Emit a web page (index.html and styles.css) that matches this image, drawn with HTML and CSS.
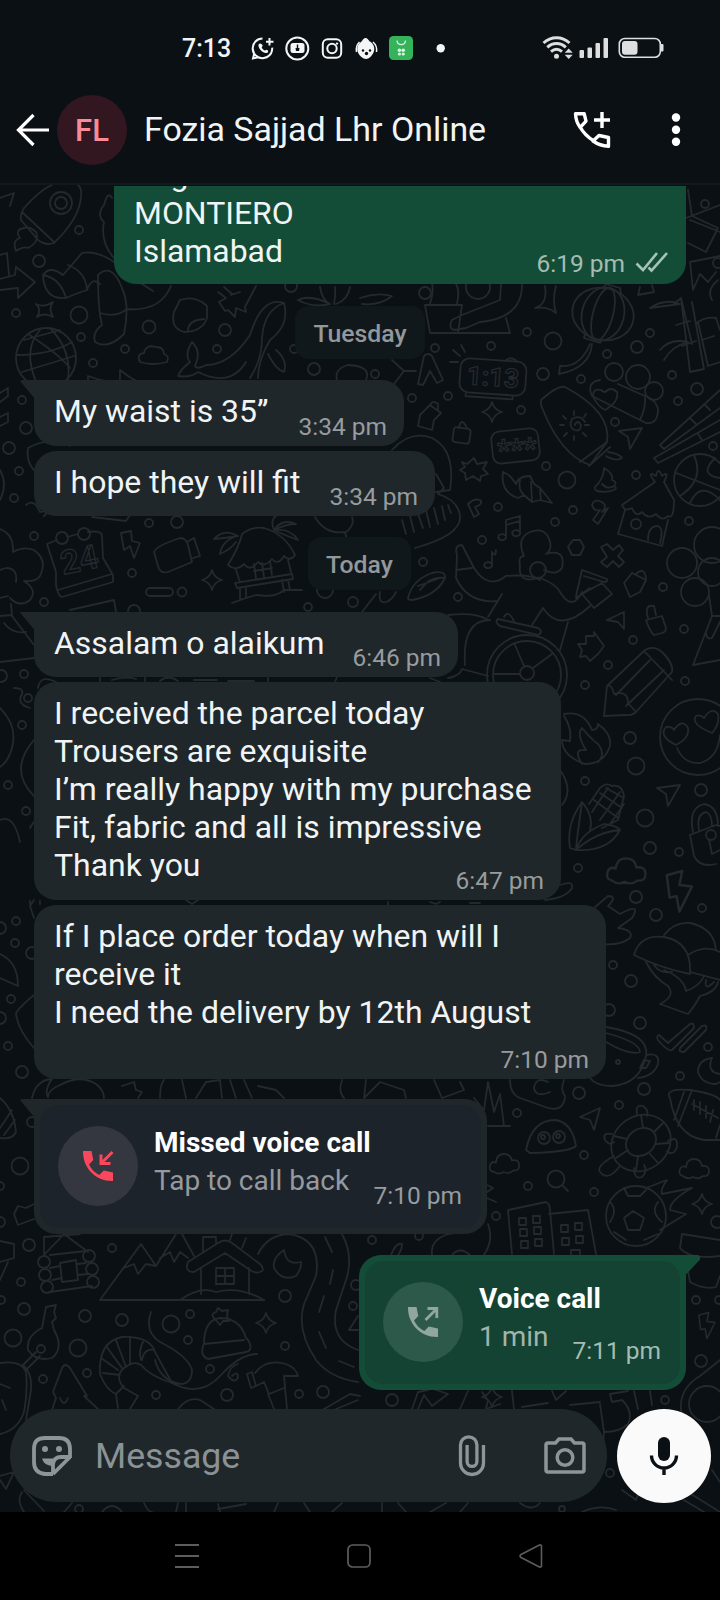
FILE: index.html
```html
<!DOCTYPE html>
<html lang="en">
<head>
<meta charset="utf-8">
<title>Chat</title>
<link rel="stylesheet" href="styles.css">
</head>
<body>
<div class="phone">
  <div class="status">
    <span class="clock">7:13</span>
    <svg class="status-icons" width="200" height="30" viewBox="250 33 200 30" fill="none" stroke="#f3f5f6" stroke-width="2">
      <path d="M262.500 38.600a9.800 9.800 0 1 0 9.700 9M252.800 48.500c0 2 .8 3.600 1.400 5l-1.200 5 5.200-1.200a9.800 9.800 0 0 0 14-9"/>
      <path d="M269.500 38v7.500M266 41.700h7.500"/>
      <path d="M258.700 44.300c-1.500 3 3.500 9 7.500 8.800 2.500-.2 2.600-2.800.4-3.400l-1.600.8c-1.500-.4-3-2-3.300-3.300l1-1.500c-.6-2-3-3.200-4-1.400z" fill="#f3f5f6" stroke="none"/>
      <circle cx="297.300" cy="48.500" r="11"/>
      <rect x="290.500" y="43" width="14" height="10" rx="2.500" fill="#f3f5f6" stroke="none"/>
      <path d="M297.500 44.500v4" stroke="#0b1014" stroke-width="1.400"/><path d="M295.500 48h4l-.5 3h-3z" fill="#0b1014" stroke="none"/>
      <rect x="322.800" y="39.300" width="18.400" height="18.400" rx="5"/><circle cx="332" cy="48.500" r="4.700"/><circle cx="337" cy="43.600" r="1.200" fill="#f3f5f6" stroke="none"/>
      <path d="M365 38c3 0 3.500 2.500 5 3.600 4 2.500 5.300 7 3.500 11-1.400 3-4.500 6.500-7.500 6.500s-6.500-3-8-6.500c-1.500-4-.5-8.500 3-10.600 1.500-1 2-3.500 4-4z" fill="#f3f5f6" stroke="none"/>
      <path d="M359.500 42a11 11 0 0 0-3 10M373 42a11 11 0 0 1 3.500 10" stroke-width="1.500"/>
      <circle cx="363" cy="50.500" r="1.200" fill="#0b1014" stroke="none"/><circle cx="370" cy="50.500" r="1.200" fill="#0b1014" stroke="none"/><circle cx="366.500" cy="53.500" r="1.700" fill="#0b1014" stroke="none"/>
      <rect x="389" y="36" width="24" height="24" rx="4.500" fill="#34b35a" stroke="none"/>
      <path d="M397 40.500c.5 5.500 8 5.500 8.500 0" stroke="#d8f5df" stroke-width="1.300"/>
      <g fill="#d8f5df" stroke="none"><circle cx="399.400" cy="50.200" r="1.800"/><circle cx="403.200" cy="50.200" r="1.800"/><circle cx="399.400" cy="54" r="1.600"/><circle cx="403.200" cy="54" r="1.600"/></g>
      <circle cx="440.700" cy="48.200" r="4.200" fill="#f3f5f6" stroke="none"/>
    </svg>
    <svg class="signal-icons" width="124" height="26" viewBox="541 35 124 26" fill="none">
      <g stroke="#dcdedf" stroke-width="3"><path d="M543.500 43c7.500-7 18.500-7 26 0"/><path d="M547.300 47.300c5.500-5 13-5 18.500 0"/><path d="M551 51.600c3.500-3 7.500-3 11 0"/></g>
      <g fill="#dcdedf"><circle cx="556.500" cy="56.300" r="2.500"/><path d="M568.700 48.500l4 4.300h-8zM568.700 59l4-4.300h-8z"/>
      <rect x="579.500" y="50" width="4.500" height="8" rx="1"/><rect x="587.500" y="47.500" width="4.500" height="10.500" rx="1"/><rect x="595.500" y="43" width="4.500" height="15" rx="1"/><rect x="603.500" y="38" width="4.500" height="20" rx="1"/>
      <rect x="622" y="41" width="15.500" height="13.800" rx="3"/><path d="M661 44h1.500a1 1 0 0 1 1 1v5.500a1 1 0 0 1-1 1H661z"/></g>
      <rect x="619.300" y="38.500" width="41" height="18.700" rx="5.500" stroke="#dcdedf" stroke-width="1.600"/>
    </svg>
  </div>

  <header class="topbar">
    <svg class="back" width="34" height="34" viewBox="16 112 34 34" fill="none" stroke="#fff" stroke-width="3.200"><path d="M49 129H19M33.500 114l-15 15 15 15"/></svg>
    <div class="avatar">FL</div>
    <h1 class="name">Fozia Sajjad Lhr Online</h1>
    <svg class="add-call" width="40" height="40" viewBox="572 110 40 40" fill="none" stroke="#fff" stroke-width="3.400">
      <path d="M575.500 113.700h8.700l1.800 7.500-5.800 6.200c-3-4-4.500-8.500-4.700-13.700zM608.500 146.300v-8.800l-9.500-2-6 5.500c5 3.500 10 5 15.500 5.300zM579.500 126c3.500 6.500 8 11.200 14.500 15" stroke-linejoin="round"/>
      <path d="M602 112v16M594 120h16"/>
    </svg>
    <svg class="more" width="10" height="36" viewBox="0 0 10 36" fill="#fff"><circle cx="5" cy="5.500" r="4.200"/><circle cx="5" cy="17.700" r="4.200"/><circle cx="5" cy="29.700" r="4.200"/></svg>
  </header>

  <main class="chat">
    <svg class="wallpaper" width="720" height="1327" viewBox="0 185 720 1327" fill="none" stroke="#23292d" stroke-width="1.800" stroke-linejoin="round" stroke-linecap="round">
      <defs>
        <path id="star" d="M0-10Q2-2 10 0Q2 2 0 10Q-2 2-10 0Q-2-2 0-10z"/>
        <path id="cloud" d="M-11 8q-5-1-3-7q2-4 6-2q1-8 8-8t8 7q7-1 7 5t-6 5q-5 4-10 1q-5 3-10-1z"/>
        <path id="bolt" d="M-8-12L3-15L1-5L10-4L1 14L-1 3L-6 4z"/>
        <path id="plane" d="M-12-7L11-10L-1 11L-3-1z"/>
        <path id="palmleaf" d="M0 0Q10-14 26-8Q14-6 0 0zM0 0Q-14-10-24 2Q-10-2 0 0zM0 0Q16 0 22 12Q10 4 0 0zM0 0Q-14 4-16 18Q-4 10 0 0zM0 0Q-2-14 4-20"/>
        <path id="note" d="M-4 10V-8L10-12V6M-4-3L10-7M-4 10a4 3 0 1 1-1-3M10 6a4 3 0 1 1-1-3"/>
      </defs>
      <!-- rocket, socks, globe -->
      <path d="M54 243Q46 246 38 240L21 220Q20 214 24 208Q40 190 52 185M54 243Q80 218 81 196Q82 188 78 185M22 212L54 242M24 228Q14 230 20 238Q12 240 16 251Q24 246 28 248Q40 242 36 232Q30 226 24 228M0 198L14 193L10 206"/>
      <circle cx="61" cy="203" r="11"/><circle cx="61" cy="203" r="6"/>
      <path d="M0 255L7 253L9 275M0 279L15 275L16 267L35 282L18 298L18 288L0 290"/>
      <path d="M43 275Q50 265 63 275L82 253Q96 250 114 262M68 265Q86 272 87 290Q92 276 100 284M43 275Q44 300 66 298Q80 292 87 290M43 275Q60 278 66 298"/>
      <path d="M98 275Q98 310 102 325Q92 332 95 342Q108 350 124 334Q130 305 122 288M100 313Q116 318 127 309M98 275Q112 262 122 288M127 309Q160 312 171 286M142 284L153 291M114 258Q100 242 104 222Q96 215 104 205Q108 190 112 198"/>
      <path d="M36 310Q44 314 53 308Q48 314 53 323Q44 318 37 323Q42 316 36 310z" transform="translate(0 -6)"/>
      <path d="M224 287L232 294M256 286L245 307L246 312L236 308L235 317L228 310L225 311L219 302L226 298L218 292M231 295L240 292"/>
      <path d="M180 300Q195 295 207 306L207 318Q202 332 184 332Q170 328 174 312zM188 331Q188 320 204 319"/>
      <circle cx="46" cy="358" r="30"/><path d="M17 355Q50 355 72 342M28 334Q60 355 70 368M40 330Q22 350 37 384M50 328Q72 350 68 380M24 340L60 330M22 372L74 356"/>
      <path d="M140 362q-4-8 4-9q2-9 12-6q8 0 8 7q6 2 3 8q-14 4-27 0z"/>
      <path d="M284 303Q262 296 250 335Q230 365 206 365Q197 370 195 366Q202 352 192 342Q184 355 190 362Q180 370 178 376Q190 378 198 372Q230 388 246 362M284 303Q290 325 270 340Q258 360 258 378M284 303Q264 310 262 338Q262 360 250 378M268 354Q276 370 284 372Q288 360 276 350"/>
      <path d="M298 300Q310 294 330 304Q312 308 298 300M320 287Q322 300 330 304M350 287Q348 300 336 304M335 287Q336 295 334 304M360 298Q376 292 392 296Q380 306 362 304M340 387Q330 370 348 365Q372 366 366 380"/>
      <path d="M88 382V376L100 380L112 382M120 382V370L128 376L138 382M0 393L8 388L8 396L0 402M0 417L8 413V422L0 426"/>
      <!-- flower pot, clock, pumpkin -->
      <path d="M425 305L462 305L458 333L510 333L506 318M425 305L430 333H458M430 304Q434 290 432 284M457 304Q460 290 456 284M452 320L462 315L500 300L501 285M452 320Q448 328 454 330L466 328L480 322Q522 318 522 285"/>
      <circle cx="425" cy="293" r="6"/><circle cx="478" cy="287" r="12"/>
      <path d="M545 286Q548 304 535 308Q548 306 556 313Q552 300 556 286"/>
      <ellipse cx="603" cy="314" rx="31" ry="26" transform="rotate(15 603 314)"/><ellipse cx="603" cy="314" rx="21" ry="27" transform="rotate(15 603 314)"/><ellipse cx="603" cy="314" rx="10" ry="27" transform="rotate(15 603 314)"/><path d="M603 288L606 284L620 288L621 294M585 334L584 338L600 343L601 339M590 344Q580 368 560 366L559 374Q590 368 592 344"/>
      <path d="M640 287L638 295L654 292L652 285"/>
      <g transform="rotate(4 493 376)"><rect x="460" y="360" width="66" height="34" rx="9"/><path d="M467 395V398H514V395M504 360q6-6 12 0"/><text class="doodle-text" x="493" y="386" text-anchor="middle" font-size="26">1:13</text></g>
      <path d="M453 350L460 356M461 345L465 352M450 362H458M392 360L404 371L394 384M416 371L404 371M418 384L424 356Q428 352 432 356L443 380L437 383L430 371L423 385z"/>
      <path d="M674 304L681 298L692 344M681 298L690 372L704 369L692 302M676 325L690 321M682 346L696 341M650 308Q665 298 680 304Q664 306 650 308M660 350Q670 338 688 342Q672 346 664 360M696 324Q704 316 716 318L720 330M698 322L708 366L720 362M702 340L714 336M690 220L720 232M686 218L720 205M688 190L692 216L718 228L706 252L688 243M690 262L720 256M690 262L693 290L700 274L708 282L716 272M712 300Q706 290 718 280"/>
      <path d="M600 380q-14 2-8 16l54 27q12 2 12-14q-2-8-10-12M640 420Q646 408 645 396L618 384"/><path d="M605 410q-8-4-12-14q0-8 8-6q2 2 4 2q6-6 12 0q2 10-12 18z"/>
      <circle cx="614" cy="372" r="9"/><circle cx="638" cy="377" r="12"/><circle cx="654" cy="391" r="9"/>
      <path d="M541 400Q558 385 565 387Q612 412 607 442L590 465Q560 455 541 405zM580 462L607 442M589 466L610 447M608 452Q620 454 622 458Q616 462 606 456"/>
      <path d="M575 425q2-6 6 0q0 7-7 5q-6-4-2-11q8-5 13 3" /><path d="M574 411v4M586 414l-2 3M563 416l3 3M560 425h4M589 425h-4M564 436l3-3M574 440v-4M586 436l-3-3"/>
      <path d="M720 390L660 445L664 449L720 408M654 458L720 420M654 458L658 463L720 432M690 418L696 424M704 404L710 410M698 434L702 440"/>
      <path d="M420 415L430 405L441 413L434 420L432 430L418 426zM430 406q2-7 8-2v6"/>
      <rect x="453" y="428" width="17" height="15" rx="3" transform="rotate(8 462 436)"/><path d="M459 428q2-12 8 0"/>
      <rect x="492" y="430" width="47" height="32" rx="8" transform="rotate(-6 515 446)"/><text class="doodle-text" x="517" y="459" text-anchor="middle" font-size="29" transform="rotate(-4 517 450)">***</text>
      <path d="M462 462L467 464L474 458L477 464L487 462L483 469L488 474L481 476L480 481L473 476L466 480L465 473L460 470L465 467z"/>
      <path d="M503 472Q500 492 518 498L524 495L532 502L540 500L552 503L540 488L534 484L530 476Q518 476 516 484Q510 474 503 472M520 480Q518 490 524 495M531 482L532 502M540 490L541 500"/>
      <path d="M598 484Q604 476 604 468Q614 474 612 480Q618 482 614 486Q608 490 602 484M598 484Q592 488 597 491Q606 493 614 490Q618 488 614 486"/>
      <circle cx="700" cy="480" r="26"/><path d="M676 473L720 490M694 455Q705 480 680 496M715 458Q698 475 720 478M690 503Q700 480 720 500"/>
      <path d="M392 450Q410 430 432 438Q456 450 450 490L436 492M436 474L444 488L438 494Q458 500 460 516Q462 535 415 548"/><path d="M402 520l4 14M410 516l4 16M418 514l5 14M426 510l4 17M434 508l4 16M442 506l3 14M448 505l3 8"/>
      <!-- shop, tree -->
      <path d="M622 505L655 482Q646 470 656 476Q658 466 662 476Q670 470 664 482L674 500Q674 520 668 516Q662 522 656 514Q648 520 642 512Q636 518 632 508Q624 512 622 505M625 510L618 534L662 546L668 520M648 540Q648 526 658 526Q664 528 660 543"/><circle cx="636" cy="524" r="5"/>
      <use href="#note" x="510" y="528"/><path d="M492 566V552Q496 558 496 550M492 566a4 3 0 1 1-1-3M468 504L474 517L479 514L475 507Q484 504 480 500Q474 498 468 504M592 505Q594 498 602 502Q608 506 602 512L608 508L598 524L593 520L600 510Q594 512 592 505"/>
      <path d="M457 555Q454 545 462 545L474 568Q488 590 506 576Q530 574 540 580M538 578Q518 584 520 566Q518 556 524 556Q516 538 530 532Q546 526 550 542Q552 550 546 554Q566 548 562 568Q556 576 544 570M540 578Q556 584 560 592Q572 612 582 592M457 555L456 578Q468 604 498 601M456 570L472 568M576 598L590 588M502 594L488 617M543 608L532 625M543 608Q560 634 590 606M576 596L582 570L607 579Q608 582 604 582L584 576M568 622L560 650M582 594L602 583L612 594L594 608z"/>
      <circle cx="538" cy="570" r="8"/>
      <path d="M573 540l7 0 4 7-4 8h-8l-4-8zM601 547l6-3 6 6 6-5 4 5-5 6 6 6-5 5-6-6-6 6-6-5 6-5z"/>
      <path d="M624 583L632 573L646 580L640 592L630 597zM636 574q8-8 10 4M408 598Q412 580 432 573Q446 570 445 578Q436 596 412 600Q408 600 408 598M420 590Q430 576 444 578M418 586L440 578"/>
      <path d="M376 594L362 612M380 592Q378 604 386 602Q392 600 396 592"/>
      <circle cx="527" cy="675" r="40"/><circle cx="527" cy="675" r="34"/><circle cx="527" cy="673" r="7"/><path d="M524 666L515 645M533 668L552 654M520 674H494M498 619L538 628Q544 632 538 635L500 626Q494 622 498 619zM504 617q4-8 10 4M448 615Q476 612 488 620M462 669L488 676M465 665Q462 620 490 620M448 678Q460 676 462 669"/>
      <path d="M578 644L586 644L586 636L594 636L594 632L604 646L598 654L590 661L586 656L580 657L582 650zM607 620L624 612V629L618 622zM646 620L662 616L666 628Q666 632 662 633L654 635Q650 632 646 620zM648 618q-4-14 6-12l2 9"/>
      <path d="M607 686L645 650Q654 645 662 652Q674 664 672 672L636 712Q632 716 625 715L604 716zM607 686Q612 684 614 694Q628 690 628 703L636 712M616 695L650 660M645 652L672 680M626 706L664 670"/>
      <circle cx="712" cy="572" r="14"/><circle cx="682" cy="563" r="15"/><circle cx="695" cy="592" r="14"/><circle cx="712" cy="545" r="18"/><path d="M709 595L712 616L693 665L720 660M712 616H720M706 632Q706 640 712 638L720 622"/>
      <circle cx="698" cy="737" r="38"/><path d="M676 745Q658 736 666 727Q672 726 674 730Q682 718 688 728Q690 738 676 745zM712 733Q690 724 696 716Q700 714 704 718Q712 706 718 714Q720 724 712 733zM677 748Q684 764 700 763Q718 758 720 735"/>
      <path d="M564 714Q584 710 592 730Q598 730 598 724Q612 734 610 746Q604 764 585 764Q562 756 562 740L570 741Q572 728 564 716M582 764Q572 748 586 750Q576 734 582 728Q592 740 598 744Q606 754 598 762"/>
      <path d="M589 804L600 788Q606 782 612 786Q622 784 624 796L618 820L602 828M594 800L618 818M600 793L622 808M606 788L624 798M592 812L608 788M600 820L620 792M610 824L624 804M582 802Q566 824 570 848L576 850Q582 832 604 824Q618 826 620 830Q608 852 576 850M582 802Q594 816 590 830M582 802Q578 830 576 848M576 850Q596 832 620 830"/>
      <use href="#plane" x="669" y="795"/>
      <path d="M690 835L716 825L720 826M690 835L694 856Q700 868 716 864M693 832Q688 808 704 804Q718 806 718 826M699 830Q696 814 706 812Q712 814 712 826M709 840L712 854L720 850"/><circle cx="711" cy="835" r="5"/>
      <use href="#cloud" transform="translate(626 870) scale(1.300)"/><use href="#bolt" transform="translate(678 892) scale(1.400)"/>
      <path d="M560 770Q574 790 562 805M560 885Q574 880 572 888Q566 898 545 900M594 908L608 896Q618 896 608 906L620 914Q642 902 632 918L618 928Q634 930 630 938Q620 946 600 944"/>
      <!-- tree, calendar, hut -->
      <path d="M0 529Q14 534 13 552Q24 546 34 550Q48 560 40 576Q36 582 24 581Q38 590 30 600Q20 608 10 598M16 582Q18 568 6 568L0 570M0 598L8 596"/><path d="M11 604L12 616L34 645M0 616L12 615M0 662L34 658M4 623Q12 634 26 632"/>
      <path d="M47 544L57 540M67 537L78 534M88 532Q102 530 102 536L103 558L113 575V582L62 597Q58 596 56 585V572L47 544M58 590L112 574"/><circle cx="62" cy="538" r="6"/><circle cx="84" cy="534" r="6"/><text class="doodle-text" x="80" y="571" text-anchor="middle" font-size="33" transform="rotate(-12 80 562)">24</text>
      <path d="M121 533L131 531L132 541L140 543L134 558L130 546L124 550z"/>
      <path d="M154 552Q156 546 180 538Q186 538 188 545L192 562L168 572Q160 574 158 566zM187 542L194 538L200 556L193 558"/><rect x="146" y="588" width="27" height="8" rx="4"/>
      <path d="M228 565Q240 545 242 534Q252 526 264 528Q285 534 295 555Q290 562 284 556Q278 566 272 559Q264 568 258 562Q250 572 244 564Q236 572 228 565M236 570L240 582M288 560L291 572M235 583L292 574L293 579L237 588zM254 564L256 578M262 563L264 577M270 561L272 575M254 571L272 568M240 588V600M246 587V598M282 580L284 592M288 580L290 590M232 603Q244 598 256 595Q276 598 284 590L302 590"/>
      <path d="M274 530Q270 520 276 516M274 530Q282 518 296 524Q286 524 274 530Q290 528 298 540Q286 536 274 530M238 536Q224 528 214 539Q226 538 238 536Q222 540 220 554Q230 550 236 542"/>
      <path d="M315 517Q325 535 346 532Q355 525 352 517M345 532L349 548M70 610L114 600L116 612M92 517L126 521L130 515M28 448Q50 436 70 446M28 448Q26 462 34 470M26 505Q34 498 40 512Q50 510 44 516M0 470Q8 484 0 500"/>
      <path d="M14 688Q24 688 22 694Q16 704 30 708M38 688Q40 674 56 682M0 708Q18 726 12 748Q8 762 0 767M34 740Q8 770 34 796M0 820Q14 814 20 842M30 828Q32 824 34 822"/>
      <circle cx="28" cy="698" r="4"/>
      <path d="M100 677V682M112 680Q126 676 136 679M145 677V682M160 681Q168 674 178 681M194 680H217M228 681H254M268 677V682M337 677L335 682M430 678L440 682"/>
      <path d="M34 900L30 906L34 918M0 954Q18 962 18 986L0 978M34 995Q16 1010 16 1014Q18 1030 34 1048M0 1098Q14 1110 16 1132Q12 1140 0 1138M0 1128L12 1110M4 1135L15 1120"/>
      <!-- gap under the long message -->
      <path d="M32 1098Q36 1080 52 1079Q44 1090 48 1097M60 1085Q80 1074 96 1084Q104 1090 104 1098M60 1085Q48 1090 48 1097M122 1086L134 1082L136 1090L142 1092L138 1098M160 1098Q160 1084 164 1080M182 1080L186 1098M196 1098L206 1082L220 1080L222 1098M230 1080L236 1098M244 1080L252 1098M258 1086L276 1090L284 1098M342 1080Q338 1092 344 1098M366 1080L364 1098L380 1082L404 1090L406 1098M434 1080L442 1098L464 1090L460 1082M474 1098L484 1110L488 1082L494 1112L500 1094L504 1126H510H488"/>
      <path d="M30 901V904M40 901V904M186 900L192 904L198 900M388 902V905M430 902L436 904L440 902M470 903L480 903"/>
      <!-- mushrooms, cup, turtle, ball -->
      <path d="M634 955Q640 934 664 937Q692 942 690 974Q660 968 634 955M664 935Q674 922 690 923Q714 928 716 950M688 955Q704 944 720 952M690 972L720 980M646 962Q654 978 668 986Q676 996 660 1004L688 1014Q696 1004 700 996Q716 992 718 982M654 965Q660 974 672 972M664 970Q684 978 686 991Q700 986 704 976M706 980Q704 992 714 982"/>
      <path d="M606 1027Q650 1034 646 1056Q640 1084 612 1086Q596 1086 590 1078M606 1033Q640 1042 640 1052Q630 1056 606 1042M646 1055Q660 1052 658 1064Q654 1076 638 1078M640 1068L644 1060L650 1061L646 1068z"/><circle cx="618" cy="1062" r="2"/>
      <path d="M659 1035L668 1043L690 1024Q694 1022 694 1028L672 1050Q668 1052 658 1040Q656 1036 659 1035M680 1048L702 1026Q708 1024 706 1030L684 1052Q678 1052 680 1048"/>
      <path d="M712 1058Q698 1060 698 1072Q702 1084 716 1084L720 1082M712 1058Q706 1072 720 1074"/>
      <path d="M510 1080Q510 1094 520 1098L548 1108Q564 1112 565 1096Q560 1090 564 1080M548 1082Q536 1076 534 1088Q536 1098 550 1092"/>
      <path d="M580 1117L600 1108L594 1130L590 1120zM526 1150Q532 1120 555 1120Q572 1122 576 1146Q570 1152 530 1153z"/><circle cx="544" cy="1138" r="6"/><circle cx="559" cy="1137" r="6"/><circle cx="543" cy="1137" r="2"/><circle cx="558" cy="1136" r="2"/>
      <use href="#cloud" transform="translate(504 1163) rotate(-4)"/><use href="#cloud" transform="translate(694 1168)"/>
      <circle cx="556" cy="1179" r="8.500"/><path d="M562 1185L568 1191"/>
      <ellipse cx="641" cy="1143" rx="31" ry="27" transform="rotate(-35 641 1143)"/><ellipse cx="641" cy="1142" rx="16" ry="13" transform="rotate(-35 641 1142)"/><path d="M641 1115L643 1128M663 1123L654 1132M669 1143L656 1144M658 1163L650 1154M636 1170L638 1157M616 1158L628 1150M614 1136L627 1139M637 1114q-2-10 6-8q6 4 4 10M668 1141q10-6 9 6q-4 10-10 4M634 1168q0 12 8 9q6-6 2-12M614 1156Q596 1166 600 1172Q608 1182 620 1166M612 1134q-10-2-7 6q4 6 9 2"/>
      <path d="M670 1098Q664 1088 690 1090Q716 1094 720 1100M670 1098Q676 1136 704 1140L720 1140M684 1092L674 1120M692 1090L678 1126M692 1104L718 1118M694 1100V1110M700 1102V1114M706 1106V1118M713 1110L710 1122M720 1125L716 1138"/>
      <circle cx="636" cy="1216" r="30"/><path d="M624 1218L633 1211L644 1218L640 1230H628zM624 1188L628 1196H640L646 1190M610 1202Q618 1210 610 1222M658 1202Q650 1212 662 1222M614 1232L626 1240M644 1240L658 1234M646 1188L667 1180Q660 1190 662 1194L692 1188Q670 1200 670 1210L686 1214L660 1230"/>
      <path d="M512 1254L508 1210L546 1202Q550 1204 550 1210L554 1254M549 1214L588 1210L596 1254"/><path d="M519 1218h7v7h-7zM533 1216h7v7h-7zM520 1229h7v7h-7zM534 1227h7v7h-7zM521 1241h7v7h-7zM535 1239h7v7h-7zM561 1225h7v7h-7zM575 1223h7v7h-7zM562 1238h7v7h-7zM576 1236h7v7h-7zM571 1254V1250H580V1254"/>
      <path d="M487 1185L493 1188L487 1192M487 1198L496 1202M391 1255Q396 1242 402 1244Q402 1250 398 1255M432 1255Q430 1240 448 1234L474 1230M488 1224Q494 1240 484 1255M452 1255Q460 1246 470 1255"/>
      <path d="M682 1234L720 1240M682 1234L680 1248Q690 1260 720 1256M686 1260L690 1282Q704 1290 716 1287L720 1276"/>
      <!-- cabin, mountains, road, tools -->
      <path d="M0 1241L14 1244V1258L0 1262M0 1280L8 1262"/>
      <path d="M44 1255L64 1234L88 1252M44 1255V1237L80 1234M50 1255L86 1251M50 1292L92 1286M60 1263L76 1260L78 1280L62 1282zM50 1268L60 1266M78 1264L86 1263M52 1280L62 1278M78 1275L88 1274"/><circle cx="44" cy="1262" r="6"/><circle cx="45" cy="1275" r="6"/><circle cx="47" cy="1287" r="6"/><circle cx="89" cy="1256" r="6"/><circle cx="92" cy="1269" r="6"/><circle cx="93" cy="1282" r="6"/>
      <path d="M100 1300L141 1244L156 1266L176 1234M182 1234L194 1256M100 1300H264M124 1268L134 1264L138 1274L146 1264L156 1266M160 1258L170 1252L174 1262L180 1252L188 1258"/>
      <path d="M188 1262L218 1243Q225 1238 232 1243L260 1264Q266 1270 260 1272Q256 1274 250 1270L225 1253L194 1272Q184 1272 188 1262M201 1268V1294M249 1268V1294M216 1268h18v16h-18zM225 1268v16M216 1276h18M180 1300Q200 1286 216 1292Q240 1286 264 1300M203 1252V1237H216V1244M232 1234L230 1240M246 1238L242 1248"/>
      <path d="M284 1250Q272 1258 274 1268Q282 1282 296 1276Q302 1268 301 1262Q286 1266 284 1250"/>
      <path d="M258 1254Q268 1234 290 1234Q322 1240 316 1276L304 1304Q296 1330 316 1360Q330 1378 358 1382M342 1234Q354 1256 346 1280L336 1310Q330 1340 358 1350M325 1237L332 1252M333 1270L330 1284M324 1296L319 1312M319 1332L326 1348M339 1361L354 1367M349 1330L358 1316M349 1330H358"/>
      <path d="M46 1307L56 1305L54 1312L56 1318L52 1322L54 1330L57 1336Q62 1350 52 1358Q36 1362 28 1350Q26 1336 42 1328zM36 1352L22 1366M40 1356L26 1370"/><circle cx="41" cy="1349" r="4"/>
      <path d="M0 1363Q22 1360 26 1372Q28 1390 24 1412Q18 1430 0 1434M24 1366Q34 1376 30 1396L26 1420M0 1384L10 1388M2 1400L6 1410M52 1410L56 1398L53 1392L62 1368Q65 1362 70 1368L87 1396L84 1396L98 1409M60 1398Q64 1408 68 1398"/>
      <path d="M100 1374Q98 1342 122 1337Q150 1336 155 1352L172 1383Q150 1376 141 1365Q134 1360 124 1368Q114 1376 124 1388L138 1396L130 1409M100 1374Q106 1390 116 1394L118 1408M101 1358L118 1370M106 1346L122 1368M116 1340L126 1367M130 1337L130 1364M144 1340Q138 1350 141 1360M103 1373L120 1375M116 1394L124 1386M142 1360Q144 1348 154 1350"/>
      <path d="M151 1312Q144 1332 160 1342Q188 1356 192 1370Q192 1384 180 1384Q160 1380 155 1360M172 1383Q200 1398 220 1376Q240 1354 257 1354M232 1376Q238 1370 238 1378Q234 1384 228 1376Q230 1366 238 1364"/>
      <path d="M204 1344Q204 1320 220 1318Q240 1318 246 1338L248 1340Q254 1350 246 1352L208 1359Q200 1356 203 1346zL244 1340M214 1318q-4-4 2-6l2-4l4 3l6-1l-1 6l2 5l-6 0l-3 4z"/>
      <path d="M247 1374L252 1372L256 1386L251 1388zM255 1373Q266 1358 286 1364Q296 1368 298 1376L284 1376L287 1409M268 1394L274 1409M256 1386L264 1382L269 1394L284 1388M324 1409L350 1394L360 1396M336 1409L358 1400M178 1409Q188 1396 200 1400L214 1409"/>
      <path d="M412 1409L418 1392L428 1390M418 1409L424 1395L432 1406L448 1394L436 1390M460 1409L468 1391M482 1392L488 1400L486 1409L500 1404M512 1391L514 1409M552 1391L556 1400L566 1391M610 1394L628 1391M610 1394L612 1402L622 1400Q634 1412 628 1424Q620 1432 604 1432L600 1404M570 1405L600 1402M522 1407L548 1403M604 1432L602 1460M634 1391L638 1409M650 1391L652 1405M682 1418Q676 1390 700 1376L720 1360"/>
      <circle cx="707" cy="1404" r="18"/>
      <use href="#bolt" transform="translate(706 1326) scale(.9)"/>
      <path d="M0 1476L14 1472L6 1489L0 1480M22 1492Q16 1500 24 1512M24 1490L44 1511M64 1512L72 1503M102 1512Q112 1500 122 1512M144 1503Q148 1512 152 1512M176 1512L178 1503M186 1512V1503M218 1504L220 1512M218 1509L246 1504M274 1512L278 1503M310 1512L304 1503M332 1512L342 1503M382 1512V1503M398 1503L406 1512M430 1512L446 1503M460 1512L468 1503M520 1503Q532 1512 540 1503M582 1512Q600 1504 616 1510M684 1500L704 1512M688 1492L720 1512M622 1490L636 1500L640 1490M712 1470L720 1482"/>
      <g>
        <circle cx="79" cy="230" r="4"/><circle cx="39" cy="261" r="6"/><circle cx="16" cy="313" r="4"/><circle cx="79" cy="315" r="8.500"/><circle cx="149" cy="327" r="6.500"/><circle cx="81" cy="337" r="4"/><circle cx="125" cy="349" r="4"/><circle cx="93" cy="363" r="4"/><circle cx="225" cy="330" r="6"/><circle cx="217" cy="349" r="4"/><circle cx="291" cy="286" r="6"/><circle cx="314" cy="369" r="6"/><circle cx="294" cy="349" r="4"/><circle cx="22" cy="400" r="4"/><circle cx="26" cy="428" r="6"/><circle cx="9" cy="448" r="6"/><circle cx="19" cy="471" r="4"/><circle cx="14" cy="498" r="4"/>
        <circle cx="705" cy="204" r="4"/><circle cx="718" cy="263" r="5"/><circle cx="527" cy="332" r="4"/><circle cx="553" cy="341" r="8.500"/><circle cx="491" cy="346" r="4"/><circle cx="435" cy="348" r="4"/><circle cx="650" cy="333" r="4"/><circle cx="637" cy="347" r="6"/><circle cx="607" cy="354" r="4"/><circle cx="543" cy="374" r="6"/><circle cx="581" cy="379" r="4"/><circle cx="672" cy="375" r="4"/><circle cx="697" cy="389" r="6"/><circle cx="678" cy="401" r="4"/><circle cx="448" cy="396" r="4"/><circle cx="412" cy="398" r="4"/><circle cx="521" cy="410" r="4"/><circle cx="615" cy="422" r="4"/><circle cx="546" cy="466" r="4"/><circle cx="567" cy="480" r="8.500"/><circle cx="636" cy="475" r="4"/><circle cx="713" cy="446" r="4"/><circle cx="498" cy="507" r="4"/><circle cx="573" cy="510" r="4"/><circle cx="375" cy="374" r="4"/>
        <circle cx="149" cy="523" r="4"/><circle cx="177" cy="522" r="6"/><circle cx="34" cy="536" r="4"/><circle cx="132" cy="573" r="4"/><circle cx="182" cy="592" r="4.500"/><circle cx="44" cy="602" r="4"/><circle cx="134" cy="611" r="6"/><circle cx="308" cy="607" r="4"/><circle cx="325" cy="590" r="8"/><circle cx="353" cy="602" r="5"/><circle cx="24" cy="674" r="4"/><circle cx="1" cy="676" r="6"/><circle cx="22" cy="725" r="4"/><circle cx="8" cy="785" r="4"/><circle cx="26" cy="811" r="4"/>
        <circle cx="555" cy="522" r="4"/><circle cx="482" cy="540" r="4"/><circle cx="423" cy="562" r="4"/><circle cx="458" cy="597" r="4"/><circle cx="663" cy="587" r="4"/><circle cx="689" cy="521" r="4"/><circle cx="684" cy="629" r="4"/><circle cx="633" cy="640" r="4"/><circle cx="608" cy="665" r="4"/><circle cx="585" cy="685" r="4"/><circle cx="685" cy="681" r="4"/><circle cx="630" cy="738" r="6"/><circle cx="636" cy="766" r="8.500"/><circle cx="585" cy="781" r="4"/><circle cx="701" cy="790" r="6"/><circle cx="645" cy="818" r="8.500"/><circle cx="650" cy="848" r="6"/><circle cx="679" cy="852" r="4"/><circle cx="578" cy="868" r="4"/><circle cx="636" cy="897" r="6"/><circle cx="702" cy="908" r="4"/><circle cx="656" cy="915" r="6"/>
        <circle cx="16" cy="921" r="4"/><circle cx="0" cy="928" r="6"/><circle cx="15" cy="943" r="4"/><circle cx="32" cy="953" r="6"/><circle cx="11" cy="999" r="4"/><circle cx="0" cy="1018" r="6"/><circle cx="8" cy="1046" r="4"/><circle cx="22" cy="1072" r="6"/><circle cx="32" cy="1122" r="5"/><circle cx="20" cy="1166" r="8.500"/><circle cx="0" cy="1186" r="4"/><circle cx="0" cy="1222" r="5"/>
        <path d="M14 1214L18 1206L26 1208L34 1204M14 1214L18 1225L34 1219"/>
        <circle cx="613" cy="965" r="4"/><circle cx="631" cy="981" r="6"/><circle cx="609" cy="1010" r="6"/><circle cx="640" cy="1023" r="6"/><circle cx="708" cy="1047" r="4"/><circle cx="680" cy="1076" r="4"/><circle cx="644" cy="1089" r="6"/><circle cx="579" cy="1093" r="6"/><circle cx="619" cy="1105" r="4"/><circle cx="517" cy="1113" r="4"/><circle cx="584" cy="1155" r="4"/><circle cx="528" cy="1186" r="4"/><circle cx="594" cy="1192" r="4"/><circle cx="496" cy="1216" r="4"/><circle cx="717" cy="1222" r="6"/><circle cx="372" cy="1240" r="4"/><circle cx="419" cy="1236" r="4"/><circle cx="696" cy="1300" r="4"/><circle cx="719" cy="1300" r="4"/><circle cx="701" cy="1361" r="6"/>
        <circle cx="29" cy="1245" r="6"/><circle cx="112" cy="1248" r="4"/><circle cx="21" cy="1282" r="4"/><circle cx="1" cy="1300" r="4"/><circle cx="24" cy="1309" r="6"/><circle cx="85" cy="1316" r="6"/><circle cx="122" cy="1320" r="6"/><circle cx="171" cy="1324" r="8.500"/><circle cx="190" cy="1314" r="4"/><circle cx="13" cy="1338" r="8.500"/><circle cx="78" cy="1348" r="8.500"/><circle cx="188" cy="1340" r="4"/><circle cx="285" cy="1296" r="6"/><circle cx="285" cy="1346" r="4"/><circle cx="43" cy="1379" r="4"/><circle cx="87" cy="1373" r="4"/><circle cx="156" cy="1395" r="4"/><circle cx="210" cy="1369" r="4"/><circle cx="227" cy="1395" r="6"/><circle cx="299" cy="1394" r="4"/><circle cx="323" cy="1392" r="6"/><circle cx="353" cy="1306" r="4"/><circle cx="356" cy="1285" r="5"/><circle cx="392" cy="1400" r="6"/><circle cx="665" cy="1400" r="4"/><circle cx="610" cy="1473" r="4"/><circle cx="79" cy="1509" r="4"/><circle cx="562" cy="1509" r="3"/>
      </g>
      <use href="#star" x="492" y="412"/><use href="#star" x="212" y="580"/><use href="#star" x="702" y="1204"/><use href="#star" x="266" y="1323"/><use href="#star" x="492" y="1397"/>
      <use href="#plane" x="631" y="438"/>
    </svg>

    <section class="messages">
      <div class="bubble out cut"><p class="text">Regards<br>MONTIERO<br>Islamabad</p>
        <span class="time">6:19 pm <svg class="ticks" width="34" height="22" viewBox="0 0 34 22" fill="none" stroke="#a4c4b5" stroke-width="2.600"><path d="M1.500 12.500L8 19L22 2M13.500 16.500L16.500 19.500L32 2"/></svg></span></div>

      <div class="day tuesday">Tuesday</div>

      <div class="bubble tail b1"><p class="text">My waist is 35”</p><span class="time">3:34 pm</span></div>
      <div class="bubble b2"><p class="text">I hope they will fit</p><span class="time">3:34 pm</span></div>

      <div class="day today">Today</div>

      <div class="bubble tail b3"><p class="text">Assalam o alaikum</p><span class="time">6:46 pm</span></div>
      <div class="bubble b4"><p class="text">I received the parcel today<br>Trousers are exquisite<br>I’m really happy with my purchase<br>Fit, fabric and all is impressive<br>Thank you</p><span class="time">6:47 pm</span></div>
      <div class="bubble b5"><p class="text">If I place order today when will I<br>receive it<br>I need the delivery by 12th August</p><span class="time">7:10 pm</span></div>

      <div class="bubble tail call missed">
        <div class="card">
          <span class="disc"><svg width="34" height="34" viewBox="0 0 34 34"><path fill="#f9485c" d="M2 2h8.500l1.800 9-4.300 4.400c2.300 4.700 5.700 8.200 10.300 10.500l4.500-4.300L32 23.500V32C15 32.500 1.500 19 2 2z"/><path d="M31.500 3L20.500 14M20 5.500V14.500h9.500" fill="none" stroke="#f9485c" stroke-width="3"/></svg></span>
          <div class="call-copy"><strong>Missed voice call</strong><span class="call-sub">Tap to call back</span></div>
          <span class="time">7:10 pm</span>
        </div>
      </div>

      <div class="bubble out tail-out call made">
        <div class="card">
          <span class="disc"><svg width="34" height="34" viewBox="0 0 34 34"><path fill="#91a69d" d="M2 2h8.500l1.800 9-4.300 4.400c2.300 4.700 5.700 8.200 10.300 10.500l4.500-4.300L32 23.500V32C15 32.500 1.500 19 2 2z"/><path d="M19.500 15L31 3.500M21.500 3.500H30.800V13" fill="none" stroke="#91a69d" stroke-width="2.800"/></svg></span>
          <div class="call-copy"><strong>Voice call</strong><span class="call-sub">1 min</span></div>
          <span class="time">7:11 pm</span>
        </div>
      </div>
    </section>

    <footer class="composer">
      <div class="field">
        <svg width="42" height="42" viewBox="0 0 42 42" fill="none" stroke="#8d9598" stroke-width="3.800"><path d="M22 39H14Q3 38 3 27V14Q3 3 14 3H28Q39 3 39 14V23M39 22L22 39M22 39V29Q23 22 30 22H39"/><path d="M11 23.500H27Q23 26 22.500 29V31Q13 31 11 23.500z" fill="#8d9598" stroke="none"/><circle cx="14" cy="14" r="3" fill="#8d9598" stroke="none"/><circle cx="28" cy="14" r="3" fill="#8d9598" stroke="none"/></svg>
        <span class="placeholder">Message</span>
        <svg class="clip" width="28" height="42" viewBox="0 0 28 42" fill="none" stroke="#8d9598" stroke-width="3.300"><path d="M25.500 10V28A11.500 11.500 0 0 1 2.500 28V10A8.200 8.200 0 0 1 18.900 10V26.500A4.900 4.900 0 0 1 9.100 26.500V10"/></svg>
        <svg width="42" height="38" viewBox="0 0 42 38" fill="none" stroke="#8d9598" stroke-width="3.500"><path d="M4 6H11.500L15 2H27L30.500 6H38Q40 6 40 8V33Q40 35 38 35H4Q2 35 2 33V8Q2 6 4 6z"/><circle cx="21" cy="20.500" r="7.800"/></svg>
      </div>
      <div class="mic"><svg width="30" height="42" viewBox="0 0 30 42"><rect x="9" y="2" width="12" height="24" rx="6" fill="#0b1014"/><path d="M2.500 20.500A12.500 12.500 0 0 0 27.500 20.500M15 33V40" fill="none" stroke="#0b1014" stroke-width="3.400"/></svg></div>
    </footer>
  </main>

  <nav class="navbar">
    <svg width="24" height="26" viewBox="0 0 24 26" stroke="#5d5d5d" stroke-width="1.800"><path d="M0 2H24M0 13H24M0 24H24"/></svg>
    <svg width="24" height="26" viewBox="0 0 24 26" fill="none" stroke="#5d5d5d" stroke-width="1.700"><rect x="1" y="2" width="22" height="22" rx="4.500"/></svg>
    <svg width="24" height="26" viewBox="0 0 24 26" fill="none" stroke="#5d5d5d" stroke-width="1.600" stroke-linejoin="round"><path d="M2 11.500L20.500 2Q22.500 1.500 22.500 3.500V22.500Q22.500 24.500 20.500 24L2 14.500Q0 13 2 11.500z"/></svg>
  </nav>
</div>
</body>
</html>
```
FILE: styles.css
```css
* { box-sizing: border-box; }
body { margin: 0; background: #000; font-family: Roboto, "Noto Sans", sans-serif; color: #f1f4f5; }
svg { display: block; flex: none; }
.phone { width: 720px; height: 1600px; display: flex; flex-direction: column; background: #0b1014; overflow: hidden; }

.status { height: 76px; padding: 33px 0 0 182px; display: flex; align-items: flex-start; }
.clock { width: 68px; font-size: 25px; line-height: 31px; font-weight: 500; white-space: nowrap; }
.signal-icons { margin: 2px 0 0 91px; }

.topbar { height: 109px; padding: 0 39px 0 16px; display: flex; align-items: center; border-bottom: 2px solid #12181c; }
.avatar { width: 70px; height: 70px; margin-left: 7px; border-radius: 50%; background: #321721; color: #f98a97; font-size: 31px; font-weight: 500; line-height: 71px; text-align: center; flex: none; }
.name { margin: 0 0 0 17px; flex: 1; font-size: 33.900px; font-weight: 400; line-height: 40px; white-space: nowrap; }
.more { margin-left: 59px; }

.chat { position: relative; height: 1327px; display: flex; flex-direction: column; }
.wallpaper { position: absolute; left: 0; top: 0; }
.doodle-text { font-family: Roboto, sans-serif; font-weight: 700; stroke-width: 1.300px; }

.messages { position: relative; flex: 1; padding-left: 34px; display: flex; flex-direction: column; align-items: flex-start; }
.bubble { position: relative; display: grid; background: #20272a; border-radius: 22px; flex: none; }
.text { grid-area: 1 / 1; margin: 0; padding: 12px 0 15.500px 20px; font-size: 31.950px; line-height: 38px; white-space: nowrap; }
.time { grid-area: 1 / 1; align-self: end; justify-self: end; margin: 0 17px 5px 0; font-size: 24.500px; line-height: 28px; color: #969c9f; white-space: nowrap; }
.out { background: #144d37; }
.out .time { color: #a4bdb2; display: flex; gap: 10px; }

.cut { margin: 1px 0 0 80px; width: 572px; height: 98px; border-radius: 0 0 22px 22px; overflow: hidden; align-content: end; }
.cut .text { padding-bottom: 14px; }
.cut .time { margin-bottom: 6.500px; }
.ticks { margin-top: 1px; }

.day { background: #11181c; color: #92989b; border-radius: 14px; font-size: 24.800px; font-weight: 500; line-height: 56px; height: 53px; text-align: center; }
.tuesday { width: 130px; margin: 22px 0 21px 261px; }
.today { width: 103px; margin: 21px 0 21.500px 274px; }

.tail { border-top-left-radius: 0; }
.tail::before { content: ""; position: absolute; left: -14px; top: 0; width: 15px; height: 19px; background: inherit; clip-path: polygon(0 1px, 2px 0, 100% 0, 100% 100%); }
.tail-out { border-top-right-radius: 0; }
.tail-out::after { content: ""; position: absolute; right: -14px; top: 0; width: 15px; height: 20px; background: inherit; clip-path: polygon(0 0, 13px 0, 100% 2px, 100% 5px, 1px 100%, 0 100%); }

.b1 { width: 370px; }
.b2 { width: 401px; margin-top: 5px; }
.b3 { width: 424px; }
.b4 { width: 527px; margin-top: 5px; }
.b5 { width: 572px; margin-top: 5.500px; height: 173.500px; }

.call { padding: 6px; height: 135px; }
.card { display: grid; grid-template-columns: 80px 1fr; column-gap: 16px; padding: 21px 0 0 18px; border-radius: 18px; background: #1d232a; }
.missed { width: 453px; margin-top: 20.500px; }
.made { width: 327px; margin: 20.500px 0 0 325px; }
.disc { grid-area: 1 / 1; width: 80px; height: 80px; border-radius: 50%; background: #34373f; display: grid; place-items: center; }
.made .disc { background: #2c594a; }
.made .card { background: #144333; }
.call-copy { grid-area: 1 / 2; margin-top: -2px; display: flex; flex-direction: column; font-size: 28px; line-height: 38px; white-space: nowrap; }
.call-copy strong { font-weight: 700; color: #fff; }
.call-sub { color: #969a9e; }
.made .call-sub { color: #a1b4ab; }
.card .time { grid-area: 1 / 1 / 2 / 3; margin: 0 19px 18.500px 0; }

.composer { position: relative; height: 103px; padding: 0 9px 0 10px; display: flex; align-items: flex-start; justify-content: space-between; }
.field { width: 597px; height: 93px; border-radius: 47px; background: #20272a; padding: 0 21px; display: flex; align-items: center; }
.placeholder { flex: 1; margin-left: 22px; font-size: 35.700px; line-height: 40px; color: #8b9295; }
.clip { margin-right: 58px; }
.mic { width: 94px; height: 94px; border-radius: 50%; background: #fafafa; display: grid; place-items: center; }

.navbar { height: 88px; background: #000; display: flex; justify-content: space-between; padding: 31px 177px 0 175px; }
```
